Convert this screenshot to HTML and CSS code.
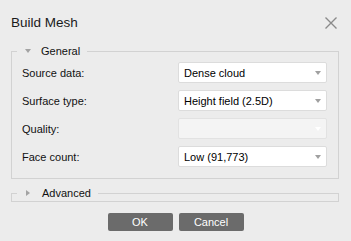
FILE: index.html
```html
<!DOCTYPE html>
<html>
<head>
<meta charset="utf-8">
<link rel="stylesheet" href="styles.css">
</head>
<body>
<div class="dialog">
  <div class="header">
    <span class="title">Build Mesh</span>
    <svg class="close" width="12" height="12" viewBox="0 0 12 12"><path d="M0.5 0.5L11.5 11.5M11.5 0.5L0.5 11.5" stroke="#8a8a8a" stroke-width="1.4" fill="none"/></svg>
  </div>
  <fieldset class="group">
    <legend class="legend"><span class="tri-down"></span><span>General</span></legend>
    <div class="form">
      <label class="label">Source data:</label>
      <div class="combo"><span>Dense cloud</span><span class="arrow"></span></div>
      <label class="label">Surface type:</label>
      <div class="combo"><span>Height field (2.5D)</span><span class="arrow"></span></div>
      <label class="label">Quality:</label>
      <div class="combo disabled"><span></span><span class="arrow"></span></div>
      <label class="label">Face count:</label>
      <div class="combo"><span>Low (91,773)</span><span class="arrow"></span></div>
    </div>
  </fieldset>
  <fieldset class="group collapsed">
    <legend class="legend"><span class="tri-right"></span><span>Advanced</span></legend>
  </fieldset>
  <div class="buttons">
    <button class="btn">OK</button>
    <button class="btn">Cancel</button>
  </div>
</div>
</body>
</html>
```
FILE: styles.css
```css
html, body {
  margin: 0;
  padding: 0;
  background: #ececec;
}
body {
  width: 351px;
  height: 241px;
  overflow: hidden;
  font-family: "Liberation Sans", Arial, sans-serif;
  font-size: 11px;
  color: #111;
}
.dialog {
  display: flex;
  flex-direction: column;
}
.header {
  display: flex;
  justify-content: space-between;
  align-items: center;
  padding: 14px 14px 0 11px;
  height: 18px;
}
.title {
  font-size: 13.5px;
  line-height: 18px;
  color: #1a1a1a;
}
.close {
  display: block;
}
.group {
  margin: 12px 12px 0 11px;
  padding: 4px 11px 11px 10px;
  border: 1px solid #d2d2d2;
  min-width: 0;
}
.legend {
  display: flex;
  align-items: center;
  gap: 10px;
  margin-left: -5px;
  padding: 0 7px 0 8px;
  line-height: 14px;
  height: 14px;
  color: #111;
}
.tri-down {
  width: 0;
  height: 0;
  border-left: 3.5px solid transparent;
  border-right: 3.5px solid transparent;
  border-top: 4px solid #a3a3a3;
}
.tri-right {
  width: 0;
  height: 0;
  margin-left: 1px;
  border-top: 3.5px solid transparent;
  border-bottom: 3.5px solid transparent;
  border-left: 4px solid #a3a3a3;
  margin-right: 2px;
}
.form {
  display: grid;
  grid-template-columns: 1fr 149px;
  row-gap: 7px;
  align-items: center;
}
.label {
  line-height: 14px;
}
.combo {
  box-sizing: border-box;
  height: 21px;
  display: flex;
  align-items: center;
  justify-content: space-between;
  padding: 0 5px 0 5px;
  background: #fff;
  border: 1px solid #dcdcdc;
  border-radius: 2px;
  color: #000;
}
.combo.disabled {
  background: #f4f4f4;
  border-color: #e2e2e2;
}
.arrow {
  width: 0;
  height: 0;
  border-left: 3.5px solid transparent;
  border-right: 3.5px solid transparent;
  border-top: 4px solid #a0a0a0;
}
.combo.disabled .arrow {
  border-top-color: #fff;
}
.collapsed {
  margin-top: 7px;
  padding: 0 11px 1px 10px;
}
.buttons {
  display: flex;
  justify-content: center;
  gap: 6px;
  margin-top: 11px;
}
.btn {
  width: 65px;
  height: 18px;
  padding: 0;
  border: none;
  border-radius: 2px;
  background: #6b6b6b;
  color: #fff;
  font-family: "Liberation Sans", Arial, sans-serif;
  font-size: 11px;
  line-height: 18px;
}
```
